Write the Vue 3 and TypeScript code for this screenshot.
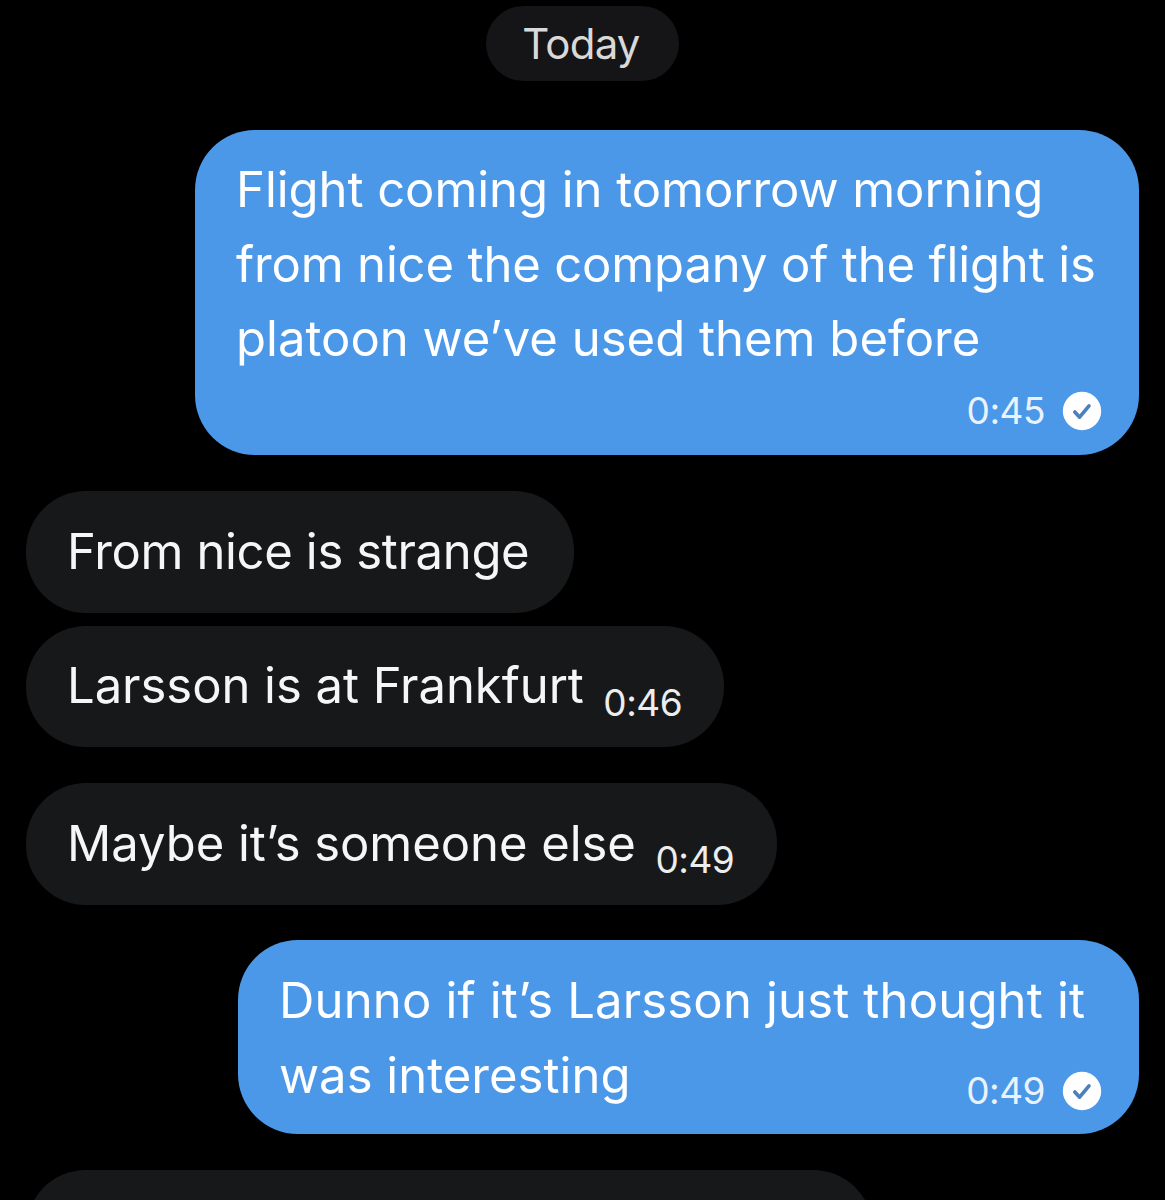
<template>
  <div class="chat">
    <div class="day-wrap"><span class="day">Today</span></div>

    <div class="bubble out first">
      <p class="text">
        <span class="line ls-a">Flight coming in tomorrow morning</span>
        <span class="line">from nice the company of the flight is</span>
        <span class="line ls-b">platoon we’ve used them before</span>
      </p>
      <div class="meta">
        <span class="time">0:45</span>
        <svg class="tick" viewBox="0 0 40 40"><circle cx="20" cy="20" r="19.2" fill="#fff" /><path d="M12.8 21l4.8 5.2 9.4-11.4" fill="none" stroke="#4a80bc" stroke-width="3.6" stroke-linecap="round" stroke-linejoin="round" /></svg>
      </div>
    </div>

    <div class="group">
      <div class="bubble in w1"><span class="text ls-tight">From nice is strange</span></div>
      <div class="bubble in w2">
        <span class="text ls-a">Larsson is at Frankfurt</span>
        <span class="time inline">0:46</span>
      </div>
    </div>

    <div class="bubble in w3">
      <span class="text ls-a">Maybe it’s someone else</span>
      <span class="time inline">0:49</span>
    </div>

    <div class="bubble out second">
      <p class="text ls-wide">Dunno if it’s Larsson just thought it</p>
      <div class="last-line">
        <span class="text ls-b">was interesting</span>
        <div class="meta">
          <span class="time">0:49</span>
          <svg class="tick" viewBox="0 0 40 40"><circle cx="20" cy="20" r="19.2" fill="#fff" /><path d="M12.8 21l4.8 5.2 9.4-11.4" fill="none" stroke="#4a80bc" stroke-width="3.6" stroke-linecap="round" stroke-linejoin="round" /></svg>
        </div>
      </div>
    </div>

    <div class="bubble in cut"></div>
  </div>
</template>

<script setup lang="ts">
</script>

<style>
html, body { background: #000; }
</style>

<style scoped>
.chat {
  height: 1200px;
  overflow: hidden;
  background: #000;
  display: flex;
  flex-direction: column;
  padding: 6px 26px 0;
  box-sizing: border-box;
  font-family: Inter, "Liberation Sans", sans-serif;
  color: #f5f6f7;
}
.day-wrap { display: flex; justify-content: center; margin-bottom: 49px; }
.day {
  width: 193px;
  height: 75px;
  padding-right: 3px;
  box-sizing: border-box;
  border-radius: 38px;
  background: #151517;
  color: #d9d9d9;
  font-size: 42px;
  letter-spacing: -0.8px;
  line-height: 75px;
  text-align: center;
}
.bubble { box-sizing: border-box; flex-shrink: 0; border-radius: 60px; }
.out { align-self: flex-end; background: #4b98e9; color: #fff; }
.in { align-self: flex-start; background: #17181a; display: flex; align-items: center; height: 122px; padding: 0 42px 0 41px; }
.text { margin: 0; font-size: 49px; line-height: 74.5px; letter-spacing: -0.15px; white-space: nowrap; }
.line { display: block; }
.ls-a { letter-spacing: -0.05px; }
.ls-b { letter-spacing: 0.02px; }
.ls-tight { letter-spacing: -0.35px; }
.ls-wide { letter-spacing: 0.17px; }
.first { width: 944px; height: 325px; padding: 23px 42px 0 41px; margin-bottom: 36px; }
.second { width: 901px; height: 194px; padding: 24px 42px 0 41px; margin-bottom: 36px; }
.meta { display: flex; align-items: center; justify-content: flex-end; gap: 17px; margin-right: -5px; height: 42px; margin-top: 13px; }
.last-line { display: flex; justify-content: space-between; align-items: center; }
.last-line .meta { margin-top: 30px; }
.time { font-size: 37px; letter-spacing: -0.5px; color: #eaf3fd; line-height: 42px; }
.tick { width: 40px; height: 40px; display: block; }
.group { display: flex; flex-direction: column; gap: 13px; margin-bottom: 36px; }
.w1 { width: 548px; }
.w2 { width: 698px; height: 121px; }
.w3 { width: 751px; margin-bottom: 35px; }
.inline { margin-left: 19.5px; margin-top: 32px; color: #eceded; }
.cut { width: 847px; height: 122px; }
</style>
